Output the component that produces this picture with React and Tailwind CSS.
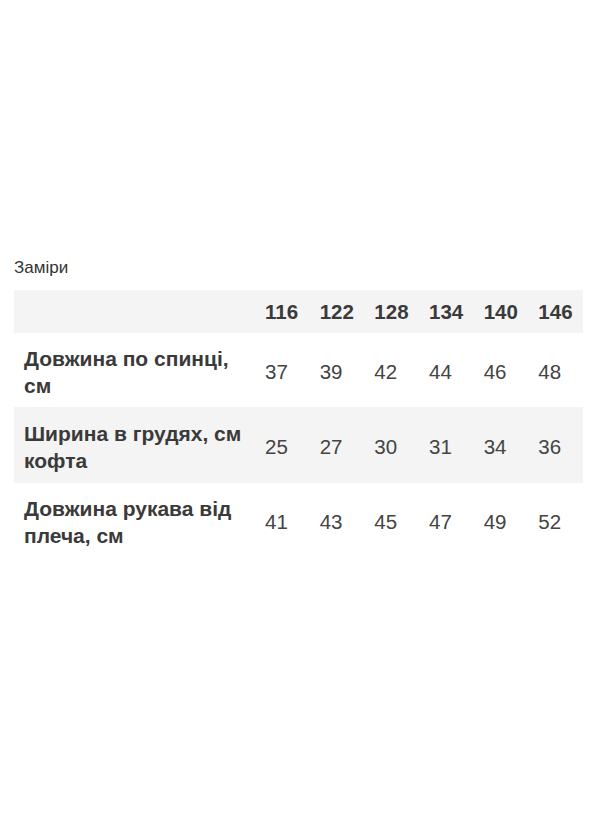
export default function App() {
  const sizes = ["116", "122", "128", "134", "140", "146"];
  const rows = [
    { label: ["Довжина по спинці,", "см"], vals: ["37", "39", "42", "44", "46", "48"], bg: "bg-white" },
    { label: ["Ширина в грудях, см", "кофта"], vals: ["25", "27", "30", "31", "34", "36"], bg: "bg-[#f4f4f4]" },
    { label: ["Довжина рукава від", "плеча, см"], vals: ["41", "43", "45", "47", "49", "52"], bg: "bg-white" },
  ];
  return (
    <div className="w-[598px] h-[832px] bg-white pt-[255px] px-[14px]" style={{ fontFamily: '"Liberation Sans", Arial, sans-serif' }}>
      <div className="text-[17px] leading-[25px] text-[#333]">Заміри</div>
      <div className="mt-[10px] w-[569px]">
        <div className="grid grid-cols-[241px_repeat(6,1fr)] bg-[#f4f4f4] h-[43px] items-center text-[20.5px] font-bold text-[#3a3a3a]">
          <div />
          {sizes.map((s) => (
            <div key={s} className="pl-[10px] pt-[2px]">{s}</div>
          ))}
        </div>
        {rows.map((r, i) => (
          <div key={i} className={`grid grid-cols-[241px_repeat(6,1fr)] items-center h-[75px] ${r.bg} ${i === 0 ? "border-b border-[#f4f4f4]" : ""}`}>
            <div className="pl-[10px] pt-[3px] font-bold text-[21px] text-[#3a3a3a] leading-[27px] whitespace-nowrap">
              {r.label[0]}
              <br />
              {r.label[1]}
            </div>
            {r.vals.map((v, j) => (
              <div key={j} className="pl-[10px] pt-[2px] text-[20.5px] text-[#444] leading-[27px]">{v}</div>
            ))}
          </div>
        ))}
      </div>
    </div>
  );
}
